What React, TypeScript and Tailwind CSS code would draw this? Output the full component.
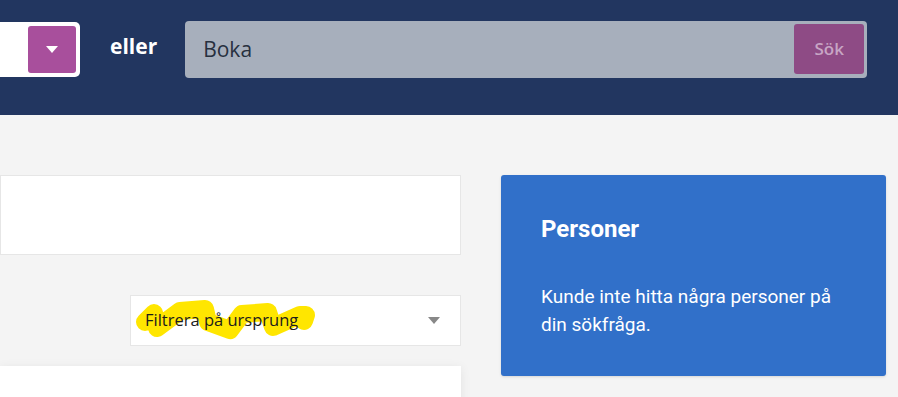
export default function App() {
  return (
    <div className="min-h-screen w-[898px] overflow-hidden bg-[#f4f4f4] font-['Open_Sans',sans-serif]">
      {/* Header */}
      <header className="flex h-[115px] items-start bg-[#223660] pt-[21px]">
        <div className="mt-[1px] flex h-[55px] w-[80px] justify-end rounded-r-[5px] bg-white p-[4px]">
          <button className="flex h-[47px] w-[48px] items-center justify-center rounded-[3px] bg-[#a84f9c]">
            <svg width="12" height="7" viewBox="0 0 12 7">
              <path d="M0 0h12L6 7z" fill="#fff" />
            </svg>
          </button>
        </div>
        <span className="ml-[30px] mt-[15px] text-[21px] font-bold leading-none text-white">eller</span>
        <div className="ml-[28px] flex h-[57px] w-[682px] items-start rounded-[4px] bg-[#a7afbc] p-[3px]">
          <span className="ml-[15px] mt-[15px] flex-1 text-[21px] leading-none text-[#27303f]">Boka</span>
          <button className="h-[50px] w-[70px] rounded-[3px] bg-[#8e4b85] text-[17px] font-semibold text-[#c7a5c4]">
            Sök
          </button>
        </div>
      </header>

      {/* Body */}
      <main className="flex gap-[40px] pt-[60px]">
        <div className="flex w-[461px] flex-col">
          <div className="h-[80px] border border-[#e6e6e6] bg-white" />
          <div className="relative ml-auto mt-[40px] flex h-[51px] w-[331px] items-center border border-[#e6e6e6] bg-white pl-[14px] pr-[20px]">
            <svg className="absolute -left-px -top-px" width="331" height="51" viewBox="130 295 331 51">
              <path
                d="M145 322 L154 313 L157 328 L180 311 L205 309 L208 322 L230 330 L242 314 L268 312 L273 327 L300 315 L306 315 L304 321"
                fill="none"
                stroke="#ffe600"
                strokeWidth="18"
                strokeLinecap="round"
                strokeLinejoin="round"
              />
            </svg>
            <span className="relative flex-1 text-[16.5px] text-[#1c1c1c]">Filtrera på ursprung</span>
            <svg className="relative" width="12" height="7" viewBox="0 0 12 7">
              <path d="M0 0h12L6 7z" fill="#888" />
            </svg>
          </div>
          <div className="mt-[20px] h-[80px] bg-white shadow-[0_2px_10px_rgba(0,0,0,0.08)]" />
        </div>

        <section className="h-[201px] w-[385px] rounded-[3px] bg-[#3170c9] pl-[40px] pr-[30px] pt-[40px] font-['Roboto',sans-serif] text-white shadow-sm">
          <h2 className="text-[24px] font-bold leading-[28px]">Personer</h2>
          <p className="mt-[40px] w-[305px] text-[19px] leading-[28px]">Kunde inte hitta några personer på din sökfråga.</p>
        </section>
      </main>
    </div>
  );
}
